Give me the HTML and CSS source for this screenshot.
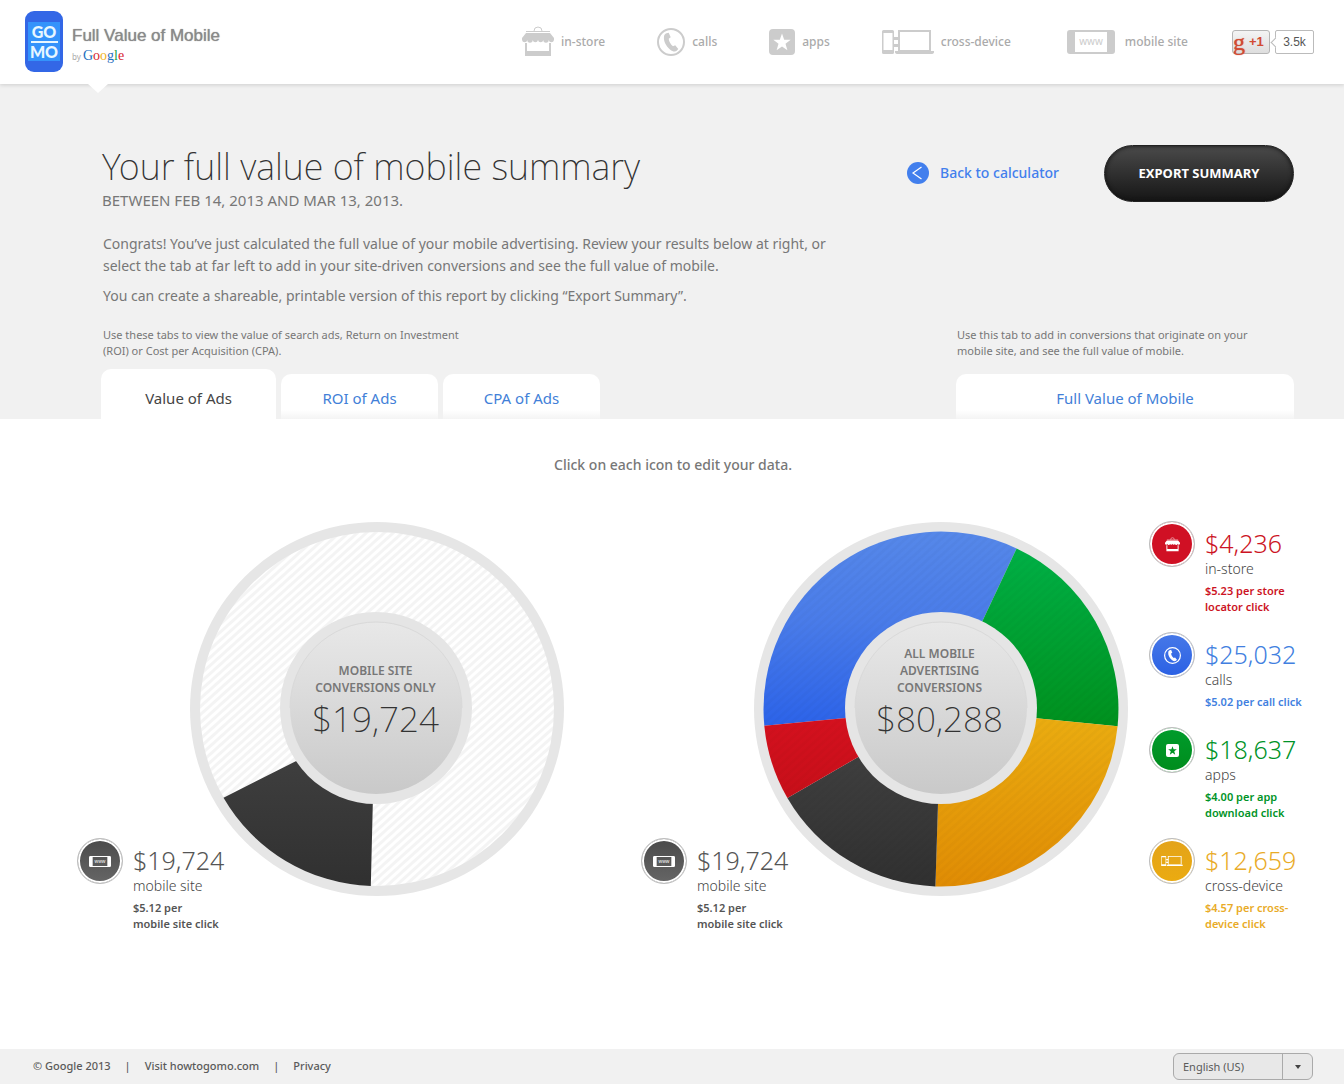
FILE: index.html
```html
<!DOCTYPE html>
<html lang="en">
<head>
<meta charset="utf-8">
<meta name="viewport" content="width=device-width, initial-scale=1">
<title>Full Value of Mobile</title>
<link rel="stylesheet" href="styles.css">
</head>
<body>
<svg class="symbols" aria-hidden="true">
  <symbol id="store" viewBox="0 0 32 31">
    <path d="M12 5a4 4 0 0 1 8 0M4 5.500h24" fill="none" stroke="currentColor"/>
    <path d="M4 7h24l4 5v2a2.700 2.700 0 0 1-5.300 0a2.700 2.700 0 0 1-5.400 0a2.700 2.700 0 0 1-5.300 0a2.700 2.700 0 0 1-5.300 0a2.700 2.700 0 0 1-5.400 0a2.700 2.700 0 0 1-5.300 0v-2z" fill="currentColor"/>
    <path d="M3 17h2v8h22v-8h2v13H3z" fill="currentColor"/>
  </symbol>
  <symbol id="phone" viewBox="0 0 28 28">
    <circle cx="14" cy="14" r="13" fill="none" stroke="currentColor" stroke-width="2"/>
    <path d="M9.500 5.300l2.200-.6 2 4.600-2 1.400c.3 2.900 1.900 5.600 4.300 7.500l2.200-1 3.100 3.900-1.600 1.600c-1.500 1.300-4 .9-6.700-1.300C8.600 17.800 6.400 12.900 7 8.600c.2-1.700 1-2.900 2.500-3.300z" fill="currentColor"/>
  </symbol>
  <symbol id="star" viewBox="0 0 26 26">
    <path fill-rule="evenodd" d="M4 0h18a4 4 0 0 1 4 4v18a4 4 0 0 1-4 4H4a4 4 0 0 1-4-4V4a4 4 0 0 1 4-4zM13 4.500l-2.200 6.200H4.300l5.200 4-1.900 6.600 5.400-3.900 5.400 3.900-1.900-6.600 5.200-4h-6.500z" fill="currentColor"/>
  </symbol>
  <symbol id="devices" viewBox="0 0 52 24">
    <path fill-rule="evenodd" d="M1.500 0h9A1.500 1.500 0 0 1 12 1.500v21a1.500 1.500 0 0 1-1.500 1.500h-9A1.500 1.500 0 0 1 0 22.500v-21A1.500 1.500 0 0 1 1.500 0zM1.500 3v17h9V3z" fill="currentColor"/>
    <path d="M12 7h5v3h-5zM12 14h5v3h-5z" fill="currentColor"/>
    <path fill-rule="evenodd" d="M16 0h33v21H16zM18 2v18h29V2z" fill="currentColor"/>
    <path d="M13 21h39v1q0 2-3 2H16q-3 0-3-2z" fill="currentColor"/>
  </symbol>
  <symbol id="mobile" viewBox="0 0 48 24">
    <path fill-rule="evenodd" d="M3 0h42a3 3 0 0 1 3 3v18a3 3 0 0 1-3 3H3a3 3 0 0 1-3-3V3a3 3 0 0 1 3-3zM8 2v20h32V2z" fill="currentColor"/>
  </symbol>
</svg>

<header class="site-header">
  <a class="brand" href="#">
    <span class="phone-logo"><span class="screen"><span>GO</span><span class="bar"></span><span>MO</span></span></span>
    <span class="brand-text">
      <span class="brand-name">Full Value of Mobile</span>
      <span class="brand-by">by <span class="google"><i class="b">G</i><i class="r">o</i><i class="y">o</i><i class="b">g</i><i class="g">l</i><i class="r">e</i></span></span>
    </span>
  </a>
  <nav class="site-nav" aria-label="Main">
    <a href="#"><svg width="32" height="31"><use href="#store"/></svg>in-store</a>
    <a href="#"><svg width="28" height="28"><use href="#phone"/></svg>calls</a>
    <a href="#"><svg width="26" height="26"><use href="#star"/></svg>apps</a>
    <a href="#"><svg width="52" height="24"><use href="#devices"/></svg>cross-device</a>
    <a href="#" class="wide"><svg width="48" height="24" viewBox="0 0 48 24"><use href="#mobile"/><text class="www" x="24" y="15">www</text></svg>mobile site</a>
  </nav>
  <div class="plus">
    <button type="button" class="plus-one"><span class="plus-g">g</span>+1</button>
    <span class="count">3.5k</span>
  </div>
</header>

<section class="hero">
  <div class="hero-top">
    <div>
      <h1>Your full value of mobile summary</h1>
      <p class="dates">BETWEEN FEB 14, 2013 AND MAR 13, 2013.</p>
    </div>
    <div class="actions">
      <a class="back" href="#"><svg width="22" height="22" viewBox="0 0 22 22" aria-hidden="true"><circle cx="11" cy="11" r="11" fill="#427fed"/><path d="M14.500 5L6 11l8.500 6" fill="none" stroke="#fff" stroke-width="1.200"/></svg>Back to calculator</a>
      <button type="button" class="export">EXPORT SUMMARY</button>
    </div>
  </div>
  <div class="intro">
    <p>Congrats! You’ve just calculated the full value of your mobile advertising. Review your results below at right, or select the tab at far left to add in your site-driven conversions and see the full value of mobile.</p>
    <p>You can create a shareable, printable version of this report by clicking “Export Summary”.</p>
  </div>
  <div class="tab-row">
    <div>
      <p class="hint hint-left">Use these tabs to view the value of search ads, Return on Investment (ROI) or Cost per Acquisition (CPA).</p>
      <div class="tabs">
        <button type="button" class="tab active">Value of Ads</button>
        <button type="button" class="tab">ROI of Ads</button>
        <button type="button" class="tab">CPA of Ads</button>
      </div>
    </div>
    <div class="full">
      <p class="hint">Use this tab to add in conversions that originate on your mobile site, and see the full value of mobile.</p>
      <div class="tabs"><button type="button" class="tab">Full Value of Mobile</button></div>
    </div>
  </div>
</section>

<main>
  <h2>Click on each icon to edit your data.</h2>
  <div class="results">
    <div class="chart-group">
      <div class="metric dark side">
        <button type="button" class="badge" aria-label="Edit mobile site"><svg width="22" height="11" viewBox="0 0 48 24"><use href="#mobile"/><text class="www" x="24" y="15">www</text></svg></button>
        <div class="metric-text"><p class="amount">$19,724</p><p class="label">mobile site</p><p class="rate">$5.12 per<br>mobile site click</p></div>
      </div>
      <div class="chart">
        <svg viewBox="0 0 376 376" aria-hidden="true">
          <defs>
            <pattern id="stripes" width="6" height="6" patternUnits="userSpaceOnUse" patternTransform="rotate(-42)"><rect width="6" height="6" fill="#fff"/><rect width="6" height="3" fill="#f4f4f4"/></pattern>
            <pattern id="sheen" width="6" height="6" patternUnits="userSpaceOnUse" patternTransform="rotate(-42)"><rect width="6" height="3" fill="#000" opacity=".02"/></pattern>
            <linearGradient id="hub" x2="0" y2="1"><stop offset="0" stop-color="#e8e8e8"/><stop offset=".3" stop-color="#dfdfdf"/><stop offset="1" stop-color="#c9c9c9"/></linearGradient>
            <linearGradient id="dark" x2="0" y2="1"><stop stop-color="#444"/><stop offset="1" stop-color="#303030"/></linearGradient>
            <linearGradient id="blue" x2="0" y2="1"><stop stop-color="#5688e9"/><stop offset=".45" stop-color="#4a7ce9"/><stop offset="1" stop-color="#2c63e9"/></linearGradient>
            <linearGradient id="green" x2="0" y2="1"><stop stop-color="#00b046"/><stop offset="1" stop-color="#00911e"/></linearGradient>
            <linearGradient id="gold" x2="0" y2="1"><stop stop-color="#ebae11"/><stop offset="1" stop-color="#e08c04"/></linearGradient>
            <linearGradient id="red" x2="0" y2="1"><stop stop-color="#d6111f"/><stop offset="1" stop-color="#c70f19"/></linearGradient>
          </defs>
          <circle cx="188" cy="188" r="187" fill="#e6e6e6"/>
          <circle cx="188" cy="188" r="177" fill="url(#stripes)"/>
          <path d="M34.500 276.700L107.200 240L188 188L183.800 283L181.800 365A177 177 0 0 1 34.500 276.700z" fill="url(#dark)"/>
          <circle cx="187" cy="187" r="96" fill="#e5e5e5"/>
          <circle cx="187" cy="187" r="86" fill="url(#hub)"/>
          <path d="M101 187a86 86 0 0 1 172 0" fill="none" stroke="#d9d9d9"/>
        </svg>
        <div class="hub-text"><p>MOBILE SITE<br>CONVERSIONS ONLY</p><strong>$19,724</strong></div>
      </div>
    </div>

    <div class="chart-group">
      <div class="metric dark side">
        <button type="button" class="badge" aria-label="Edit mobile site"><svg width="22" height="11" viewBox="0 0 48 24"><use href="#mobile"/><text class="www" x="24" y="15">www</text></svg></button>
        <div class="metric-text"><p class="amount">$19,724</p><p class="label">mobile site</p><p class="rate">$5.12 per<br>mobile site click</p></div>
      </div>
      <div class="chart">
        <svg viewBox="0 0 376 376" aria-hidden="true">
          <circle cx="188" cy="188" r="187" fill="#e6e6e6"/>
          <path d="M188 188L11.300 204.700A177.500 177.500 0 0 1 263.600 27.400z" fill="url(#blue)"/>
          <path d="M188 188L263.600 27.400A177.500 177.500 0 0 1 364.600 205.300z" fill="url(#green)"/>
          <path d="M188 188L364.600 205.300A177.500 177.500 0 0 1 182.400 365.400z" fill="url(#gold)"/>
          <path d="M188 188L182.400 365.400A177.500 177.500 0 0 1 34.400 277z" fill="url(#dark)"/>
          <path d="M188 188L34.400 277A177.500 177.500 0 0 1 11.300 204.700z" fill="url(#red)"/>
          <circle cx="188" cy="188" r="177" fill="url(#sheen)"/>
          <circle cx="188" cy="187" r="96" fill="#e5e5e5"/>
          <circle cx="188" cy="187" r="86" fill="url(#hub)"/>
          <path d="M102 187a86 86 0 0 1 172 0" fill="none" stroke="#d9d9d9"/>
        </svg>
        <div class="hub-text"><p>ALL MOBILE<br>ADVERTISING<br>CONVERSIONS</p><strong>$80,288</strong></div>
      </div>
    </div>

    <div class="metric-list">
      <div class="metric red">
        <button type="button" class="badge" aria-label="Edit in-store"><svg width="15" height="15"><use href="#store"/></svg></button>
        <div class="metric-text"><p class="amount">$4,236</p><p class="label">in-store</p><p class="rate">$5.23 per store<br>locator click</p></div>
      </div>
      <div class="metric blue">
        <button type="button" class="badge" aria-label="Edit calls"><svg width="17" height="17"><use href="#phone"/></svg></button>
        <div class="metric-text"><p class="amount">$25,032</p><p class="label">calls</p><p class="rate">$5.02 per call click</p></div>
      </div>
      <div class="metric green">
        <button type="button" class="badge" aria-label="Edit apps"><svg width="13" height="13"><use href="#star"/></svg></button>
        <div class="metric-text"><p class="amount">$18,637</p><p class="label">apps</p><p class="rate">$4.00 per app<br>download click</p></div>
      </div>
      <div class="metric gold">
        <button type="button" class="badge" aria-label="Edit cross-device"><svg width="22" height="10"><use href="#devices"/></svg></button>
        <div class="metric-text"><p class="amount">$12,659</p><p class="label">cross-device</p><p class="rate">$4.57 per cross-<br>device click</p></div>
      </div>
    </div>
  </div>
</main>

<footer class="site-footer">
  <div class="legal">
    <span>© Google 2013</span><span>|</span><a href="#">Visit howtogomo.com</a><span>|</span><a href="#">Privacy</a>
  </div>
  <div class="language">
    <select aria-label="Language"><option>English (US)</option></select>
    <span class="caret" aria-hidden="true"></span>
  </div>
</footer>
</body>
</html>
```
FILE: styles.css
```css
* { box-sizing: border-box; }

body {
  margin: 0;
  min-height: 100vh;
  display: flex;
  flex-direction: column;
  background: #fff;
  color: #777;
  font-family: "Noto Sans", "Open Sans", sans-serif;
  font-size: 14px;
}

p, h1, h2 { margin: 0; }
a { color: inherit; text-decoration: none; }
button, select { font: inherit; color: inherit; cursor: pointer; }
svg { flex: none; }
.symbols { position: absolute; width: 0; height: 0; }
.www { font-size: 10px; font-weight: 400; text-anchor: middle; fill: currentColor; }

/* Header */
.site-header {
  position: relative;
  display: flex;
  align-items: center;
  height: 84px;
  padding: 0 30px 1px 25px;
  box-shadow: 0 1px 4px rgba(0, 0, 0, .15);
}
.site-header::after {
  content: "";
  position: absolute;
  left: 88px;
  top: 84px;
  width: 20px;
  height: 9px;
  background: #fff;
  clip-path: polygon(0 0, 100% 0, 50% 100%);
}
.brand { display: flex; align-items: center; gap: 9px; }
.phone-logo {
  display: grid;
  place-items: center;
  width: 38px;
  height: 61px;
  border-radius: 9px;
  background: #3367e6;
}
.screen {
  display: flex;
  flex-direction: column;
  align-items: center;
  width: 32px;
  padding-top: 1px;
  background: #3493fb;
  color: #e8f7ff;
  font: 900 16px/18px Lato, sans-serif;
}
.bar { width: 27px; height: 2px; background: #e8f7ff; }
.brand-text { display: flex; flex-direction: column; padding-top: 7px; }
.brand-name {
  font: 17px/22px "Liberation Sans", Arial, sans-serif;
  color: #8a8a8a;
  text-shadow: 0 0 1px #8a8a8a;
}
.brand-by { font-size: 8px; line-height: 17px; color: #aaa; }
.google { font-family: "Liberation Serif", serif; font-size: 14px; }
.google i { font-style: normal; }
.google .b { color: #1f6fc0; }
.google .r { color: #d8232f; }
.google .y { color: #efb31c; }
.google .g { color: #1ba049; }

.site-nav { display: flex; gap: 52px; margin-left: auto; }
.site-nav a {
  display: flex;
  align-items: center;
  gap: 7px;
  font-size: 12px;
  font-weight: 500;
  color: #aaa;
}
.site-nav svg { color: #ccc; }
.site-nav .wide { gap: 10px; margin-left: 4px; }
.plus { display: flex; gap: 5px; margin-left: 44px; }
.plus-one {
  display: flex;
  align-items: center;
  gap: 4px;
  width: 38px;
  height: 24px;
  padding: 0;
  border: 1px solid #b5b5b5;
  border-radius: 3px;
  background: linear-gradient(#f4f4f4, #dedede);
  color: #d14b34;
  font: bold 13px/22px "Liberation Sans", Arial, sans-serif;
}
.plus-g { font: 24px/20px "Liberation Serif", serif; text-shadow: 0 0 1px #d14b34; }
.count {
  position: relative;
  width: 39px;
  height: 24px;
  border: 1px solid #bbb;
  border-radius: 2px;
  background: #fff;
  color: #555;
  font: 12px/22px "Liberation Sans", Arial, sans-serif;
  text-align: center;
}
.count::before {
  content: "";
  position: absolute;
  left: -4px;
  top: 8px;
  width: 6px;
  height: 6px;
  border: 1px solid #bbb;
  border-width: 0 0 1px 1px;
  background: #fff;
  transform: rotate(45deg);
}

/* Summary */
.hero { padding: 61px 50px 0 101px; background: #f1f1f1; }
.hero-top { display: flex; justify-content: space-between; padding-left: 1px; }
h1 { font-size: 36px; line-height: 44px; font-weight: 200; color: #333; }
.dates { font-size: 15px; line-height: 22px; }
.actions { display: flex; align-items: flex-start; gap: 45px; }
.back {
  display: flex;
  align-items: center;
  gap: 11px;
  height: 55px;
  font-weight: 500;
  color: #427fed;
}
.export {
  width: 190px;
  height: 57px;
  padding: 0 0 2px;
  border: 1px solid #222;
  border-radius: 29px;
  background: linear-gradient(#4a4a4a, #161616);
  box-shadow: inset 0 0 4px #111;
  color: #fff;
  font-size: 13px;
  font-weight: 700;
}
.intro { display: grid; gap: 8px; max-width: 740px; margin-top: 22px; padding-left: 2px; line-height: 22px; }
.tab-row { display: flex; justify-content: space-between; margin-top: 20px; }
.hint { padding-left: 1px; font-size: 11px; line-height: 16px; }
.hint-left { max-width: 370px; padding-left: 2px; }
.full { width: 338px; }
.full .hint { max-width: 310px; }
.tabs { display: flex; align-items: flex-end; gap: 5px; height: 50px; margin-top: 10px; }
.tab {
  width: 157px;
  height: 45px;
  padding: 2px 0 0;
  border: 0;
  border-radius: 10px 10px 0 0;
  background: linear-gradient(#fff 36px, #f4f4f4);
  color: #427fd8;
  font-size: 15px;
}
.tab.active { width: 175px; height: 50px; padding-top: 8px; background: #fff; color: #444; }
.full .tab { width: 100%; }

/* Results */
main { flex: 1; padding: 35px 24px 40px 77px; }
h2 { margin-right: 51px; font-size: 14px; line-height: 22px; font-weight: 500; text-align: center; }
.results {
  display: grid;
  grid-template-columns: minmax(488px, 564px) minmax(488px, 508px) 171px;
  margin-top: 45px;
}
.chart-group { display: flex; align-items: flex-start; }
.metric { display: flex; gap: 10px; }
.metric.side { align-self: flex-end; width: 147px; margin-right: -35px; z-index: 1; }
.metric-text { padding-top: 8px; white-space: nowrap; }
.badge {
  display: grid;
  place-items: center;
  flex: none;
  width: 46px;
  height: 46px;
  padding: 0;
  border: 1px solid #bbb;
  border-radius: 50%;
  box-shadow: inset 0 0 0 2px #fff;
  color: #fff;
}
.amount { font-size: 25px; line-height: 28px; font-weight: 300; }
.label { margin-top: 1px; font-size: 14px; line-height: 22px; font-weight: 300; color: #444; }
.rate { margin-top: 3px; font-size: 11px; line-height: 16px; font-weight: 600; }
.metric-list { display: grid; gap: 17px; align-content: start; }
.dark { color: #555; }
.red { color: #cc1324; }
.blue { color: #427fe0; }
.green { color: #009327; }
.gold { color: #e9ab27; }
.dark .badge { background: linear-gradient(#4a4a4a, #666) padding-box; }
.red .badge { background: #d01024 padding-box; }
.blue .badge { background: linear-gradient(#4779e8, #2a60e4) padding-box; }
.green .badge { background: linear-gradient(#009c2c, #008c1c) padding-box; }
.gold .badge { background: linear-gradient(#e3a31a, #ebab10) padding-box; }

.chart { display: grid; width: 376px; }
.chart > * { grid-area: 1 / 1; }
.hub-text {
  align-self: end;
  padding: 0 3px 155px 0;
  text-align: center;
}
.hub-text p { font-size: 12px; line-height: 17px; font-weight: 600; }
.hub-text strong { display: block; font-size: 35px; line-height: 46px; font-weight: 200; color: #333; }

/* Footer */
.site-footer {
  display: flex;
  align-items: center;
  justify-content: space-between;
  height: 35px;
  padding: 0 31px 0 33px;
  background: #f1f1f1;
  color: #5a5a5a;
  font-size: 11px;
}
.legal { display: flex; gap: 14px; padding-bottom: 2px; font-weight: 500; }
.language { display: grid; width: 140px; height: 27px; }
.language > * { grid-area: 1 / 1; }
.language select {
  appearance: none;
  padding: 0 40px 0 9px;
  border: 1px solid #aaa;
  border-radius: 6px;
  background: #e8e8e8;
}
.caret {
  display: grid;
  place-items: center;
  justify-self: end;
  width: 31px;
  border-left: 1px solid #aaa;
  pointer-events: none;
}
.caret::before {
  content: "";
  border: 3px solid transparent;
  border-top: 4px solid #444;
  border-bottom: 0;
}
```
